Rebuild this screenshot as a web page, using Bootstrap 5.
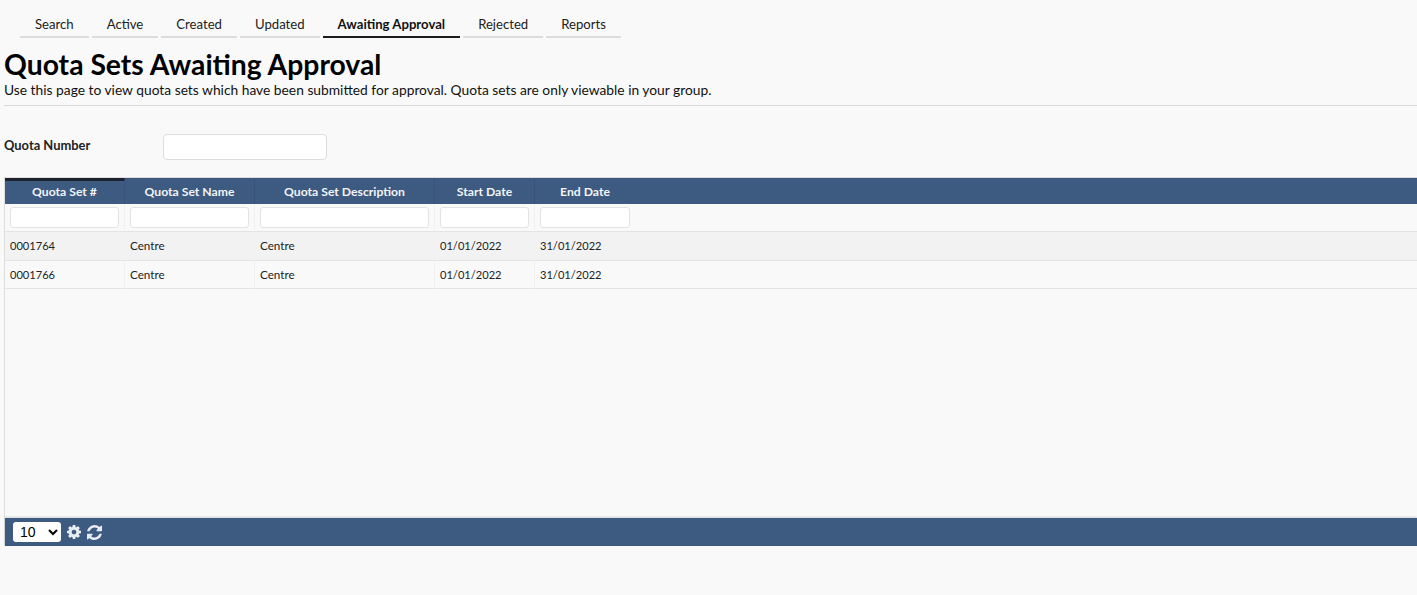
<!DOCTYPE html>
<html lang="en"><head><meta charset="utf-8"><title>Quota Sets</title>
<link href="https://cdn.jsdelivr.net/npm/bootstrap@5.3.0/dist/css/bootstrap.min.css" rel="stylesheet">
<style>
html,body{height:595px;overflow:hidden}
body{background:#f9f9f9;font-family:Lato,sans-serif;color:#111;font-size:14px}
.tabbar{padding:11px 0 0 20px;gap:3px;height:38px}
.tabbar a{display:block;padding:4px 15px 0;height:27px;line-height:19px;color:#222;text-decoration:none;border-bottom:2px solid #ddd;font-size:13.15px}
.tabbar a.on{font-weight:700;color:#111;border-bottom-color:#1b1b1b}
.pagehead{padding-left:4px}
.pagehead h1{font-size:28.3px;font-weight:700;line-height:36px;margin:8px 0 0;color:#000}
.pagehead p{margin:0;line-height:17px;font-size:13.8px;height:17px;margin-top:-1px}
.rule{border-top:1px solid #d9d9d9;margin:7px 0 0 4px}
.quotarow{padding:10px 0 0 4px;height:71px}
.quotarow label{width:159px;font-weight:700;font-size:12.9px;margin:0 0 2px;color:#222}
.quotarow input{width:164px;height:26px;border:1px solid #ddd;border-radius:4px;background:#fff}
.gridwrap{margin-left:4px;height:369px;border-left:1px solid #ddd;border-top:1px solid #ddd;width:1413px}
.gridcols{display:grid;grid-template-columns:120px 130px 180px 100px 100px 1fr}
.hd{height:26px;background:#3d5a80;color:#f2f4f7;font-weight:700;font-size:12.2px;text-align:center;line-height:27px;border-right:1px solid #38527a}
.hd.sel{border-top:3px solid #1f2330;line-height:21px}
.hd.none{border-right:0}
.hd.open{border-right:0}
.flt{height:28px;padding:3px 5px 0;border-right:1px solid #f1f1f1;border-bottom:1px solid #e4e4e4}
.flt input{display:block;width:100%;height:21px;border:1px solid #e3e3e3;border-radius:3px;background:#fff}
.flt.open{border-right:0}
.flt.open input{width:90px}
.flt:last-child{border-right:0}
.cell{height:29px;padding:0 5px;font-size:11.7px;line-height:27px;color:#222;border-right:1px solid #f1f1f1;border-bottom:1px solid #e4e4e4}
.shortrow .cell{height:28px}
.cell.num{font-size:11.1px}
.cell.open,.cell:last-child{border-right:0}
.alt{background:#f2f2f2}
.gridbody{flex:1 1 0}
.gridfoot{height:28px;flex:none;background:#3d5a80;padding-left:8px;gap:6px;box-shadow:0 -1px 2px rgba(0,0,0,.15)}
.gridfoot select{width:48px;height:20px;border:0;border-radius:3px;background:#fff;font-family:"Liberation Sans",sans-serif;font-size:14px;padding:0 0 0 3px;color:#000}
.gridfoot svg{display:block;fill:#e8edf3}
</style></head>
<body>
<nav class="tabbar d-flex">
<a href="#">Search</a><a href="#">Active</a><a href="#">Created</a><a href="#">Updated</a><a href="#" class="on">Awaiting Approval</a><a href="#">Rejected</a><a href="#">Reports</a>
</nav>
<div class="pagehead">
<h1>Quota Sets Awaiting Approval</h1>
<p>Use this page to view quota sets which have been submitted for approval. Quota sets are only viewable in your group.</p>
</div>
<div class="rule"></div>
<div class="quotarow d-flex align-items-center">
<label for="qn">Quota Number</label><input id="qn" type="text">
</div>
<div class="gridwrap d-flex flex-column">
<div class="gridcols">
<div class="hd sel">Quota Set #</div><div class="hd">Quota Set Name</div><div class="hd">Quota Set Description</div><div class="hd">Start Date</div><div class="hd open">End Date</div><div class="hd none"></div>
<div class="flt"><input type="text"></div><div class="flt"><input type="text"></div><div class="flt"><input type="text"></div><div class="flt"><input type="text"></div><div class="flt open"><input type="text"></div><div class="flt"></div>
</div>
<div class="gridbody">
<div class="gridcols alt"><div class="cell num">0001764</div><div class="cell">Centre</div><div class="cell">Centre</div><div class="cell num">01/01/2022</div><div class="cell num open">31/01/2022</div><div class="cell"></div></div>
<div class="gridcols shortrow"><div class="cell num">0001766</div><div class="cell">Centre</div><div class="cell">Centre</div><div class="cell num">01/01/2022</div><div class="cell num open">31/01/2022</div><div class="cell"></div></div>
</div>
<div class="gridfoot d-flex align-items-center">
<select aria-label="Rows"><option>10</option><option>25</option></select>
<svg width="14" height="14" viewBox="128 128 1536 1536" aria-hidden="true"><path d="M1152 896q0-106-75-181t-181-75-181 75-75 181 75 181 181 75 181-75 75-181zm512-109v222q0 12-8 23t-20 13l-185 28q-19 54-39 91 35 50 107 138 10 12 10 25t-9 23q-27 37-99 108t-94 71q-12 0-26-9l-138-108q-44 23-91 38-16 136-29 186-7 28-36 28h-222q-14 0-24.500-8.500t-11.500-21.500l-28-184q-49-16-90-37l-141 107q-10 9-25 9-14 0-25-11-126-114-165-168-7-10-7-23 0-12 8-23 15-21 51-66.500t54-70.500q-27-50-41-99l-183-27q-13-2-21-12.500t-8-23.500v-222q0-12 8-23t19-13l186-28q14-46 39-92-40-57-107-138-10-12-10-24 0-10 9-23 26-36 98.500-107.500t94.500-71.500q13 0 26 10l138 107q44-23 91-38 16-136 29-186 7-28 36-28h222q14 0 24.500 8.500t11.500 21.500l28 184q49 16 90 37l142-107q9-9 24-9 13 0 25 10 129 119 165 170 7 8 7 22 0 12-8 23-15 21-51 66.500t-54 70.500q26 50 41 98l183 28q13 2 21 12.500t8 23.500z"/></svg>
<svg width="15" height="15" viewBox="128 128 1536 1536" aria-hidden="true"><path d="M1639 1056q0 5-1 7-64 268-268 434.500t-478 166.500q-146 0-282.500-55t-243.500-157l-129 129q-19 19-45 19t-45-19-19-45v-448q0-26 19-45t45-19h448q26 0 45 19t19 45-19 45l-137 137q71 66 161 102t187 36q134 0 250-65t186-179q11-17 53-117 8-23 30-23h192q13 0 22.500 9.500t9.500 22.500zm25-800v448q0 26-19 45t-45 19h-448q-26 0-45-19t-19-45 19-45l138-138q-148-137-349-137-134 0-250 65t-186 179q-11 17-53 117-8 23-30 23h-199q-13 0-22.500-9.500t-9.500-22.500v-7q65-268 270-434.500t480-166.500q146 0 284 55.500t245 156.500l130-129q19-19 45-19t45 19 19 45z"/></svg>
</div>
</div>
<script src="https://cdn.jsdelivr.net/npm/bootstrap@5.3.0/dist/js/bootstrap.bundle.min.js"></script>
</body></html>
